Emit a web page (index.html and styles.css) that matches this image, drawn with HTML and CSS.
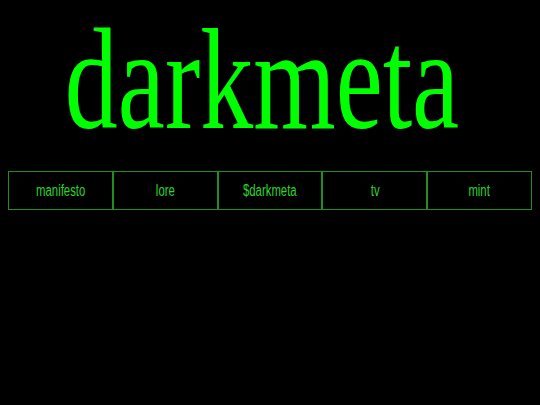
FILE: index.html
```html
<!DOCTYPE html>
<html>
<head>
<meta charset="utf-8">
<link rel="stylesheet" href="styles.css">
</head>
<body>
<header class="title"><span class="title-text">darkmeta</span></header>
<nav class="nav">
  <a class="nav-item"><span class="nav-text">manifesto</span></a>
  <a class="nav-item"><span class="nav-text">lore</span></a>
  <a class="nav-item"><span class="nav-text">$darkmeta</span></a>
  <a class="nav-item"><span class="nav-text">tv</span></a>
  <a class="nav-item"><span class="nav-text">mint</span></a>
</nav>
</body>
</html>
```
FILE: styles.css
```css
html, body {
  margin: 0;
  padding: 0;
  background: #000;
}
.title {
  display: flex;
  justify-content: center;
  align-items: flex-start;
  box-sizing: border-box;
  height: 160px;
  padding-top: 8px;
  padding-right: 16px;
  margin-bottom: 11px;
  font-family: "Liberation Serif", "Times New Roman", serif;
  font-size: 106px;
  line-height: 106px;
  color: #00ff00;
  white-space: nowrap;
}
.title-text {
  display: block;
  transform: scaleY(1.36);
  transform-origin: center top;
}
.nav {
  display: flex;
  margin: 0 8px;
}
.nav-item {
  flex: 1;
  height: 37px;
  border: 1px solid #1f8f1f;
  display: flex;
  align-items: center;
  justify-content: center;
  font-family: "Liberation Sans", Arial, sans-serif;
  font-size: 16px;
  color: #2bd52b;
}
.nav-text {
  display: inline-block;
  transform: scaleX(0.71);
  white-space: nowrap;
}
```
